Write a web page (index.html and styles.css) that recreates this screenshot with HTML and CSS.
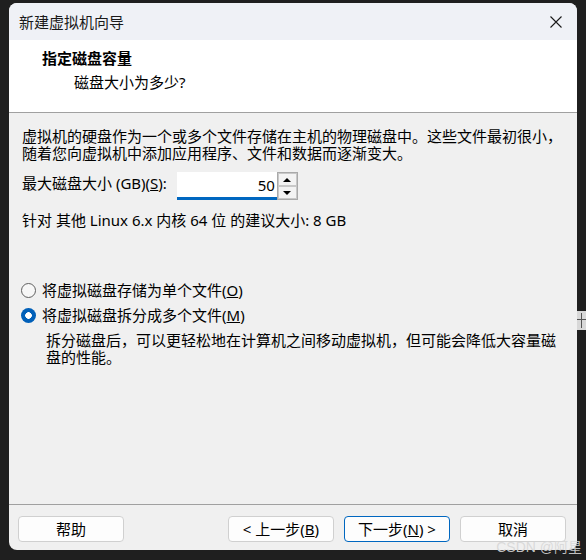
FILE: index.html
```html
<!DOCTYPE html>
<html lang="zh-CN">
<head>
<meta charset="utf-8">
<title>新建虚拟机向导</title>
<link rel="stylesheet" href="styles.css">
</head>
<body>
<div class="window">
  <div class="titlebar">
    <span class="title">新建虚拟机向导</span>
    <span class="close">
      <svg width="12" height="12" viewBox="0 0 12 12"><path d="M0.5 0.5 L11.5 11.5 M11.5 0.5 L0.5 11.5" stroke="#1a1a1a" stroke-width="1.1" fill="none"/></svg>
    </span>
  </div>
  <div class="header">
    <div class="h-title">指定磁盘容量</div>
    <div class="h-sub">磁盘大小为多少?</div>
  </div>
  <div class="content">
    <p class="desc">虚拟机的硬盘作为一个或多个文件存储在主机的物理磁盘中。这些文件最初很小，<br>随着您向虚拟机中添加应用程序、文件和数据而逐渐变大。</p>
    <div class="size-row">
      <span class="label">最大磁盘大小 (GB)(<u>S</u>):</span>
      <div class="spin">
        <div class="spin-input">50</div>
        <div class="spin-btns">
          <span class="spin-btn"><span class="tri-up"></span></span>
          <span class="spin-btn"><span class="tri-down"></span></span>
        </div>
      </div>
    </div>
    <p class="rec">针对 其他 Linux 6.x 内核 64 位 的建议大小: 8 GB</p>
    <div class="radios">
      <div class="radio-row"><span class="radio"></span><span>将虚拟磁盘存储为单个文件(<u>O</u>)</span></div>
      <div class="radio-row"><span class="radio checked"></span><span>将虚拟磁盘拆分成多个文件(<u>M</u>)</span></div>
    </div>
    <p class="note">拆分磁盘后，可以更轻松地在计算机之间移动虚拟机，但可能会降低大容量磁<br>盘的性能。</p>
  </div>
  <div class="footer">
    <span class="btn">帮助</span>
    <span class="btn push">&lt; 上一步(<u>B</u>)</span>
    <span class="btn default">下一步(<u>N</u>) &gt;</span>
    <span class="btn">取消</span>
  </div>
</div>
<div class="watermark">CSDN @阿星</div>
<div class="cursor"><span class="cur-h"></span><span class="cur-v"></span></div>
</body>
</html>
```
FILE: styles.css
```css
html, body {
  margin: 0;
  padding: 0;
  background: #1f1f1f;
  width: 586px;
  height: 560px;
  overflow: hidden;
  font-family: "Noto Sans", "Noto Sans CJK SC", sans-serif;
  color: #000;
}
body { position: relative; }
.window {
  margin: 3px 0 0 9px;
  width: 568px;
  height: 547px;
  background: #f0f0f0;
  border-radius: 8px;
  overflow: hidden;
  display: flex;
  flex-direction: column;
}
.titlebar {
  height: 37px;
  flex: none;
  background: #eff1f6;
  display: flex;
  align-items: center;
  justify-content: space-between;
  padding: 0 15px 0 10px;
}
.title {
  font-size: 15px;
  color: #1a1a1a;
  line-height: 20px;
}
.close { display: flex; width: 12px; height: 12px; margin-top: 1px; }
.header {
  height: 72px;
  flex: none;
  background: #fff;
  border-bottom: 1px solid #a0a0a0;
  box-sizing: content-box;
}
.h-title {
  font-weight: bold;
  font-size: 15px;
  line-height: 20px;
  padding: 8px 0 0 33px;
}
.h-sub {
  font-size: 15px;
  line-height: 20px;
  padding-left: 65px;
  margin-top: 4px;
}
.content {
  flex: 1;
  padding: 15px 8px 0 13px;
  font-size: 15px;
  line-height: 17px;
}
.desc { margin: 0; }
.size-row {
  margin-top: 10px;
  height: 28px;
  display: flex;
  align-items: center;
}
.label { margin-bottom: 6px; margin-right: 10px; }
.spin { display: flex; height: 28px; }
.spin-input {
  width: 98px;
  height: 25px;
  background: #fff;
  border-bottom: 3px solid #0067c0;
  text-align: right;
  padding-right: 2px;
  font-size: 15px;
  line-height: 26px;
}
.spin-btns {
  width: 19px;
  height: 26px;
  border: 1px solid #a9a9a9;
  display: flex;
  flex-direction: column;
  background: #f0f0f0;
}
.spin-btn {
  flex: 1;
  border: 1px solid #c8c8c8;
  background: #f3f3f3;
  display: flex;
  align-items: center;
  justify-content: center;
}
.tri-up, .tri-down {
  width: 0; height: 0;
  border-left: 4px solid transparent;
  border-right: 4px solid transparent;
}
.tri-up { border-bottom: 4px solid #000; }
.tri-down { border-top: 4px solid #000; }
.rec { margin: 12px 0 0; }
.radios {
  margin-top: 51px;
  display: flex;
  flex-direction: column;
  gap: 5px;
  margin-left: -1px;
}
.radio-row {
  display: flex;
  align-items: center;
  gap: 6px;
  height: 20px;
}
.radio {
  width: 13px;
  height: 13px;
  border-radius: 50%;
  border: 1px solid #5f5f5f;
  background: #f7f7f7;
  flex: none;
}
.radio.checked {
  width: 15px;
  height: 15px;
  border: none;
  background: radial-gradient(circle, #fff 0 3px, #005fb8 3.6px);
}
.note {
  margin: 7px 0 0 24px;
  line-height: 16.5px;
}
.footer {
  flex: none;
  border-top: 1px solid #a0a0a0;
  padding: 11px 11px 8px 9px;
  display: flex;
  gap: 10px;
}
.btn {
  width: 104px;
  height: 24px;
  border: 1px solid #d0d0d0;
  border-radius: 4px;
  background: #fdfdfd;
  font-size: 15px;
  line-height: 24px;
  text-align: center;
}
.btn.push { margin-left: auto; }
.btn.default { border-color: #0067c0; }
.watermark {
  position: absolute;
  right: 4px;
  bottom: 5px;
  font-size: 14px;
  line-height: 16px;
  color: rgba(215, 215, 215, 0.9);
  font-family: "Liberation Sans", "Noto Sans CJK SC", sans-serif;
}
.cursor {
  position: absolute;
  left: 577px;
  top: 311px;
  width: 9px;
  height: 19px;
  background: #d8d8d8;
}
.cur-h {
  position: absolute;
  left: 0; top: 8px;
  width: 9px; height: 1px;
  background: #555;
}
.cur-v {
  position: absolute;
  left: 4px; top: 2px;
  width: 1px; height: 15px;
  background: #555;
}
```
